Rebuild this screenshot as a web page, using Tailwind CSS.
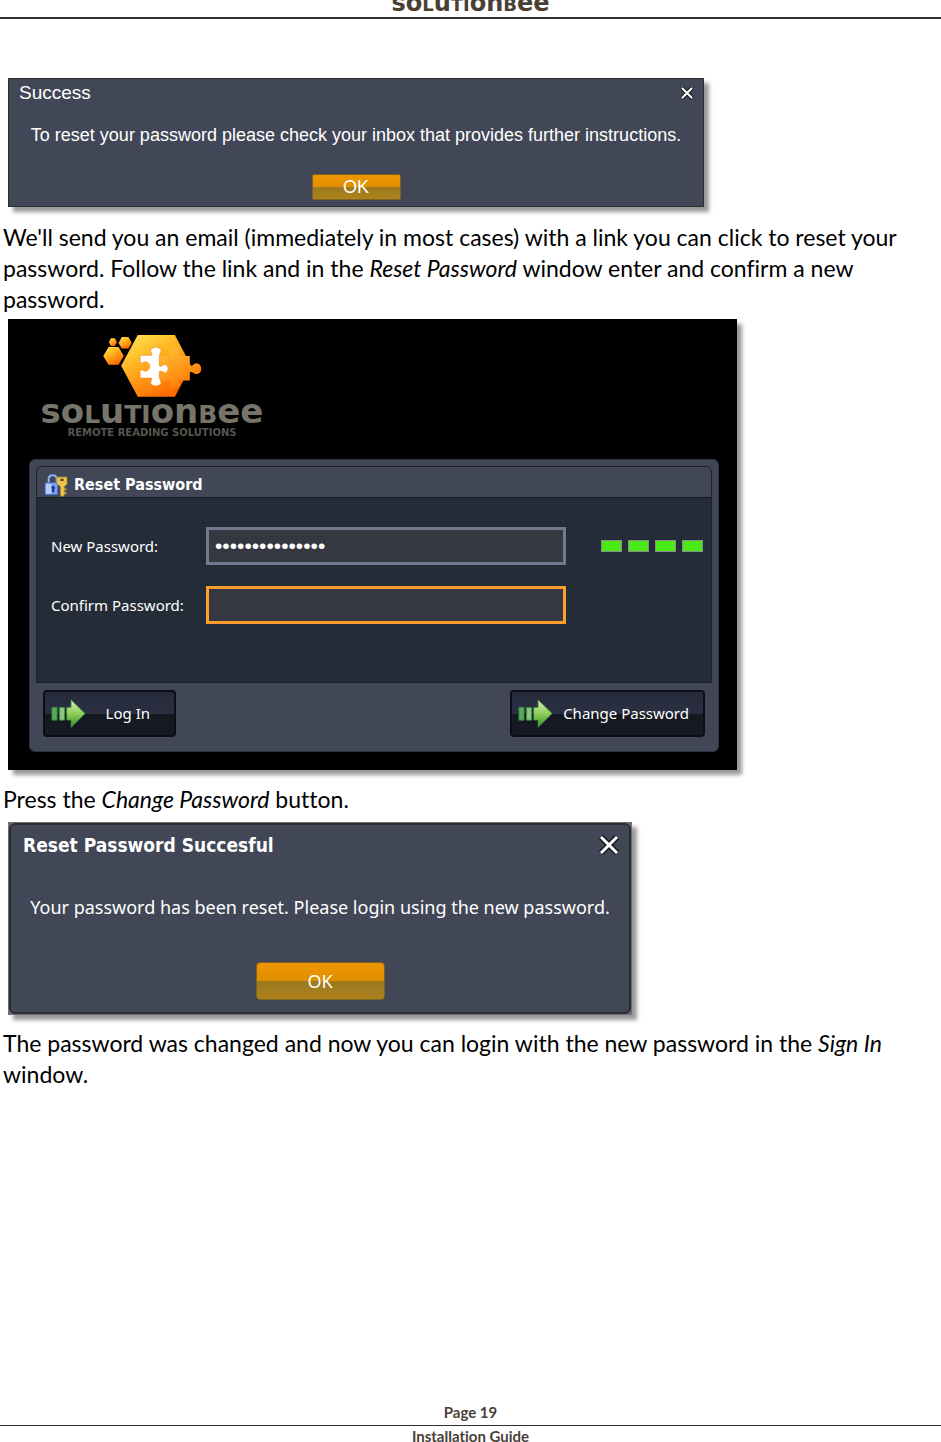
<!DOCTYPE html>
<html lang="en">
<head>
    <meta charset="UTF-8">
    <meta name="viewport" content="width=device-width, initial-scale=1.0">
    <title>SolutionBee Installation Guide - Page 19</title>
    <script src="https://cdn.jsdelivr.net/npm/@tailwindcss/browser@4"></script>
</head>
<body class="bg-white text-black min-h-screen flex flex-col font-['Lato',sans-serif] [font-variant-ligatures:none]">

    <!-- Page header -->
    <header class="h-[19px] flex items-end justify-center overflow-hidden border-b-2 border-[#332d29]">
        <div class="font-['DejaVu_Sans',sans-serif] font-bold text-2xl leading-6 text-[#4a3f35]">so<span class="text-lg leading-6">L</span>u<span class="text-lg leading-6">TI</span>on<span class="text-lg leading-6">B</span>ee</div>
    </header>

    <main class="pt-[59px] pr-4 pl-[3px] text-[23px] leading-[31px]">

        <!-- Success dialog -->
        <section class="ml-[5px] w-[696px] max-w-full bg-[#414756] border border-[#2b2d2c] shadow-[5px_5px_4px_rgba(0,0,0,0.4)] pb-1.5 text-white font-['Liberation_Sans',sans-serif] text-lg leading-7">
            <div class="flex items-center justify-between pl-2.5 pr-2">
                <h2 class="text-[19px] leading-7">Success</h2>
                <button type="button" aria-label="Close">
                    <svg class="w-4 h-4" viewBox="0 0 16 16" fill="none"><path d="M3 3l10 10M13 3L3 13" stroke="#15171c" stroke-width="4"/><path d="M3 3l10 10M13 3L3 13" stroke="#fff" stroke-width="2"/></svg>
                </button>
            </div>
            <p class="mt-3.5 text-center whitespace-nowrap">To reset your password please check your inbox that provides further instructions.</p>
            <div class="mt-[25px] flex justify-center">
                <button type="button" class="w-[89px] h-[26px] rounded-xs border border-[#7c6423] bg-[linear-gradient(#ee9500,#e08f00_50%,#9a7920_50%,#ae821b)] leading-6">OK</button>
            </div>
        </section>

        <p class="mt-[15px]">We'll send you an email (immediately in most cases) with a link you can click to reset your password. Follow the link and in the <em>Reset Password</em> window enter and confirm a new password.</p>

        <!-- Reset password screen -->
        <section class="mt-1 ml-[5px] w-[729px] max-w-full bg-black shadow-[5px_5px_4px_rgba(0,0,0,0.4)] pt-[15px] pb-[18px] pl-[21px] pr-[18px] text-white font-['Noto_Sans',sans-serif] text-[15px]">
            <div class="w-[246px] flex flex-col items-center font-['DejaVu_Sans',sans-serif] font-bold text-[#77756a]">
                <svg class="w-[99px] h-16" viewBox="0 0 297 193">
                    <defs>
                        <linearGradient id="honey" x1="0" y1="0" x2="0.6" y2="1">
                            <stop offset="0" stop-color="#ffe95a"/>
                            <stop offset="0.45" stop-color="#ffb420"/>
                            <stop offset="1" stop-color="#ff6a00"/>
                        </linearGradient>
                        <linearGradient id="piece" x1="0" y1="0" x2="0.6" y2="1">
                            <stop offset="0" stop-color="#ffc43a"/>
                            <stop offset="1" stop-color="#ff7a05"/>
                        </linearGradient>
                    </defs>
                    <path d="M0 66l16-27h30l16 27-16 27H16z" fill="url(#honey)"/>
                    <path d="M46 27l10-18h20l10 18-10 17H56z" fill="url(#honey)"/>
                    <path d="M17 25l6-12h12l6 12-6 11H23z" fill="url(#honey)"/>
                    <path d="M54 96L104 3h112l49 93-49 93H104z" fill="url(#honey)"/>
                    <path d="M166 66h34c4-7-4-9-2-16 5-10 27-10 32 0 2 7-6 9-2 16h33v28c8 6 10-4 18-6 21-2 22 34 2 33-10-2-12-10-20-5v24h-31c-6 7 3 9 0 16-6 8-25 8-30 0-2-7 5-9 1-16h-35z" fill="url(#piece)"/>
                    <path d="M111 64h35c4-7-5-9-3-16 5-11 26-11 31 0 2 7-6 9-2 16h-3v32c8 5 9-3 16-4 14 0 14 25 0 25-7-1-8-8-16-4v20h3c-4 7 4 9 2 16-5 10-26 10-31 0-2-7 6-9 2-16h-34v-24c8-4 9 3 16 3 17 0 17-28 0-28-7 0-8 6-16 2z" fill="#fff" stroke="#f78a12" stroke-width="2"/>
                </svg>
                <div class="mt-px text-[34px] leading-6">so<span class="text-[25px] leading-6">L</span>u<span class="text-[25px] leading-6">TI</span>on<span class="text-[25px] leading-6">B</span>ee</div>
                <div class="text-[10px] leading-3 text-[#57564e] whitespace-nowrap">REMOTE READING SOLUTIONS</div>
            </div>

            <form class="mt-5 rounded-md border border-[#2e3340] bg-[#414756] px-1.5 pt-1.5 pb-3.5">
                <div class="rounded-t-md border border-[#1d2025]">
                    <div class="flex items-center gap-1.5 h-[31px] pl-[7px] pt-1.5 border-b border-[#1a1c20]">
                        <svg class="w-6 h-6" viewBox="0 0 72 72">
                            <path d="M14 30V18c0-15 24-15 24 0v12" fill="none" stroke="#8fb0f5" stroke-width="6"/>
                            <rect x="3" y="29" width="38" height="36" rx="3" fill="#7d9ff0" stroke="#4067cf" stroke-width="2"/>
                            <path d="M6 33h16v29H6z" fill="#b9cdfc"/>
                            <path d="M27 38a6 6 0 0 1 4 10v10h-7V48a6 6 0 0 1 3-10z" fill="#1c3a8c"/>
                            <path d="M39 12h30v22l-8 6v27l-6 4-6-4V40l-10-6z" fill="#efc54d" stroke="#a87b28" stroke-width="2"/>
                            <path d="M49 17h10v7H49z" fill="#5c4a2c"/>
                            <path d="M61 46h6v6h-6zM61 57h6v6h-6z" fill="#d9a531"/>
                        </svg>
                        <h2 class="font-['DejaVu_Sans_Condensed','DejaVu_Sans',sans-serif] font-bold text-base leading-6">Reset Password</h2>
                    </div>
                    <div class="bg-[#242d37] pt-[29px] pb-[58px] pl-3.5 pr-2 flex flex-col gap-[21px]">
                        <div class="flex items-center">
                            <label for="newPassword" class="w-[155px] leading-6">New Password:</label>
                            <input id="newPassword" type="password" value="beehive12345678" class="w-[360px] h-[38px] px-1.5 border-3 border-[#727a8e] bg-[#353840] font-['Liberation_Sans',sans-serif] text-[21px] outline-none">
                            <div class="ml-auto flex gap-1.5" role="img" aria-label="Password strength">
                                <span class="w-[21px] h-3 bg-[#49e916] border border-[#8b8f8c]"></span>
                                <span class="w-[21px] h-3 bg-[#49e916] border border-[#8b8f8c]"></span>
                                <span class="w-[21px] h-3 bg-[#49e916] border border-[#8b8f8c]"></span>
                                <span class="w-[21px] h-3 bg-[#49e916] border border-[#8b8f8c]"></span>
                            </div>
                        </div>
                        <div class="flex items-center">
                            <label for="confirmPassword" class="w-[155px] leading-6">Confirm Password:</label>
                            <input id="confirmPassword" type="password" class="w-[360px] h-[38px] px-1.5 border-3 border-[#ff9c2e] bg-[#353840] font-['Liberation_Sans',sans-serif] text-[21px] outline-none">
                        </div>
                    </div>
                </div>
                <div class="mt-[7px] flex justify-between px-[7px]">
                    <button type="button" class="w-[133px] h-[47px] flex items-center rounded-sm border-2 border-[#0c0e14] bg-[linear-gradient(#252b3a,#2a3042_50%,#14181f_50%,#171a26)] pl-1.5 pr-6">
                        <svg class="w-[35px] h-[29px]" viewBox="90 90 104 88">
                            <defs>
                                <linearGradient id="leaf" x1="0" y1="0" x2="0" y2="1">
                                    <stop offset="0" stop-color="#d3efb5"/>
                                    <stop offset="0.5" stop-color="#8fce5b"/>
                                    <stop offset="1" stop-color="#2f8f2c"/>
                                </linearGradient>
                            </defs>
                            <path d="M92 116h15v38H92z" fill="#5fa565" stroke="#3a9a35" stroke-width="3"/>
                            <path d="M115 116h15v38h-15z" fill="#8fc486" stroke="#3a9a35" stroke-width="3"/>
                            <path d="M137 116h13V93l42 41-42 42v-22h-13z" fill="url(#leaf)" stroke="#4fa83c" stroke-width="2"/>
                        </svg>
                        <span class="grow text-right">Log In</span>
                    </button>
                    <button type="submit" class="w-[195px] h-[47px] flex items-center rounded-sm border-2 border-[#0c0e14] bg-[linear-gradient(#252b3a,#2a3042_50%,#14181f_50%,#171a26)] pl-1.5 pr-3.5">
                        <svg class="w-[35px] h-[29px]" viewBox="90 90 104 88">
                            <path d="M92 116h15v38H92z" fill="#5fa565" stroke="#3a9a35" stroke-width="3"/>
                            <path d="M115 116h15v38h-15z" fill="#8fc486" stroke="#3a9a35" stroke-width="3"/>
                            <path d="M137 116h13V93l42 41-42 42v-22h-13z" fill="url(#leaf)" stroke="#4fa83c" stroke-width="2"/>
                        </svg>
                        <span class="grow text-right whitespace-nowrap">Change Password</span>
                    </button>
                </div>
            </form>
        </section>

        <p class="mt-3.5">Press the <em>Change Password</em> button.</p>

        <!-- Password changed dialog -->
        <section class="mt-[7px] ml-[5px] w-[624px] max-w-full bg-[#6c6e71] shadow-[5px_5px_4px_rgba(0,0,0,0.4)] p-px text-white font-['Noto_Sans',sans-serif]">
            <div class="rounded-md border-2 border-[#2b2d30] bg-[#414756] pb-3">
                <div class="flex items-center justify-between pl-3 pr-2 h-10">
                    <h2 class="font-['DejaVu_Sans_Condensed','DejaVu_Sans',sans-serif] font-bold text-[19px]">Reset Password Succesful</h2>
                    <button type="button" aria-label="Close">
                        <svg class="w-6 h-6" viewBox="0 0 24 24" fill="none"><path d="M4 4l16 16M20 4L4 20" stroke="#15171c" stroke-width="6"/><path d="M4 4l16 16M20 4L4 20" stroke="#fff" stroke-width="3"/></svg>
                    </button>
                </div>
                <p class="mt-7 text-center text-lg leading-7 whitespace-nowrap">Your password has been reset. Please login using the new password.</p>
                <div class="mt-[41px] flex justify-center">
                    <button type="button" class="w-[129px] h-[38px] rounded-sm border border-[#7c6423] bg-[linear-gradient(#ee9500,#e08f00_50%,#9a7920_50%,#ae821b)] text-lg">OK</button>
                </div>
            </div>
        </section>

        <p class="mt-[13px]">The password was changed and now you can login with the new password in the <em>Sign In</em> window.</p>
    </main>

    <!-- Page footer -->
    <footer class="mt-auto text-center font-bold text-[15px] leading-5 text-[#4a4038]">
        <p class="pb-[3px]">Page 19</p>
        <p class="h-[17px] overflow-hidden border-t border-[#332d29]">Installation Guide</p>
    </footer>
</body>
</html>
